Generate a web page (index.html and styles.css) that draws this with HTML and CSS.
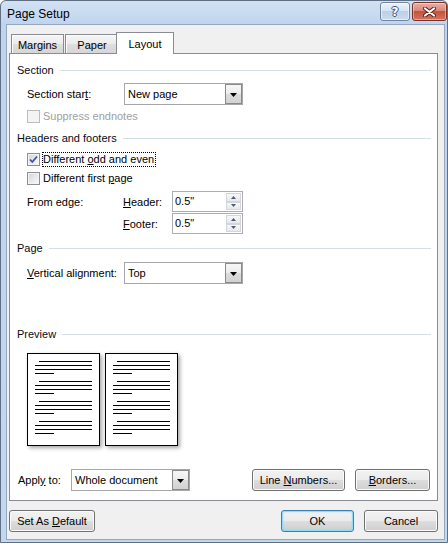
FILE: index.html
```html
<!DOCTYPE html>
<html>
<head>
<meta charset="utf-8">
<title>Page Setup</title>
<link rel="stylesheet" href="styles.css">
</head>
<body>
<div class="window">
  <div class="titlebar">
    <span class="title">Page Setup</span>
    <div class="caption">
      <div class="cbtn help"><span class="qmark">?</span></div>
      <div class="cbtn close">
        <svg width="13" height="10" viewBox="0 0 13 10"><path d="M2 1.5L11 8.5M11 1.5L2 8.5" stroke="#5a2018" stroke-width="4" stroke-linecap="round"/><path d="M2 1.5L11 8.5M11 1.5L2 8.5" stroke="#fff" stroke-width="2.2" stroke-linecap="round"/></svg>
      </div>
    </div>
  </div>
  <div class="client">
    <div class="tabs">
      <div class="tab tab-margins">Margins</div>
      <div class="tab tab-paper">Paper</div>
      <div class="tab tab-layout active">Layout</div>
    </div>
    <div class="panel">
      <div class="group g-section">Section</div>
      <div class="row r-start">
        <span class="label w97">Section star<u>t</u>:</span>
        <div class="combo"><span class="val">New page</span><span class="drop"><svg width="7" height="4" viewBox="0 0 7 4"><path d="M0 0H7L3.5 4Z" fill="#000"/></svg></span></div>
      </div>
      <div class="check r-suppress disabled">
        <span class="cb"></span><span class="cb-text">Suppress endnotes</span>
      </div>
      <div class="group g-hf">Headers and footers</div>
      <div class="check r-odd">
        <span class="cb"><svg width="11" height="11" viewBox="0 0 11 11"><path d="M2 5.5L4.3 8L9 2.5" fill="none" stroke="#3f549b" stroke-width="1.8"/></svg></span><span class="cb-text focus">Different <u>o</u>dd and even</span>
      </div>
      <div class="check r-first">
        <span class="cb"></span><span class="cb-text">Different first <u>p</u>age</span>
      </div>
      <div class="row r-edge">
        <span class="label w96 edge-label">From edge:</span>
        <div class="spins">
          <div class="spinrow">
            <span class="label w49"><u>H</u>eader:</span>
            <div class="spin"><span class="val">0.5&quot;</span><span class="spinbtns"><span class="sb"><svg width="5" height="3" viewBox="0 0 5 3"><path d="M0 3H5L2.5 0Z" fill="#4d5c78"/></svg></span><span class="sb"><svg width="5" height="3" viewBox="0 0 5 3"><path d="M0 0H5L2.5 3Z" fill="#4d5c78"/></svg></span></span></div>
          </div>
          <div class="spinrow">
            <span class="label w49"><u>F</u>ooter:</span>
            <div class="spin"><span class="val">0.5&quot;</span><span class="spinbtns"><span class="sb"><svg width="5" height="3" viewBox="0 0 5 3"><path d="M0 3H5L2.5 0Z" fill="#4d5c78"/></svg></span><span class="sb"><svg width="5" height="3" viewBox="0 0 5 3"><path d="M0 0H5L2.5 3Z" fill="#4d5c78"/></svg></span></span></div>
          </div>
        </div>
      </div>
      <div class="group g-page">Page</div>
      <div class="row r-valign">
        <span class="label w97"><u>V</u>ertical alignment:</span>
        <div class="combo"><span class="val">Top</span><span class="drop"><svg width="7" height="4" viewBox="0 0 7 4"><path d="M0 0H7L3.5 4Z" fill="#000"/></svg></span></div>
      </div>
      <div class="group g-preview">Preview</div>
      <div class="preview">
        <svg class="page" width="73" height="93" viewBox="0 0 73 93"><rect x="0.5" y="0.5" width="72" height="92" fill="#fff" stroke="#000"/><path d="M12 8.5H65M8 12.5H65M8 16.5H65M8 20.5H27M12 28.5H65M8 32.5H65M8 36.5H65M8 40.5H27M12 48.5H65M8 52.5H65M8 56.5H65M8 60.5H27M12 68.5H65M8 72.5H65M8 76.5H65M8 80.5H27" stroke="#000" stroke-width="1"/></svg>
        <svg class="page" width="73" height="93" viewBox="0 0 73 93"><rect x="0.5" y="0.5" width="72" height="92" fill="#fff" stroke="#000"/><path d="M12 8.5H65M8 12.5H65M8 16.5H65M8 20.5H27M12 28.5H65M8 32.5H65M8 36.5H65M8 40.5H27M12 48.5H65M8 52.5H65M8 56.5H65M8 60.5H27M12 68.5H65M8 72.5H65M8 76.5H65M8 80.5H27" stroke="#000" stroke-width="1"/></svg>
      </div>
      <div class="apply">
        <span class="label w53">Appl<u>y</u> to:</span>
        <div class="combo"><span class="val">Whole document</span><span class="drop"><svg width="7" height="4" viewBox="0 0 7 4"><path d="M0 0H7L3.5 4Z" fill="#000"/></svg></span></div>
        <div class="btn btn-lines">Line <u>N</u>umbers...</div>
        <div class="btn btn-borders"><u>B</u>orders...</div>
      </div>
    </div>
    <div class="footer">
      <div class="btn btn-default">Set As <u>D</u>efault</div>
      <div class="btn btn-ok">OK</div>
      <div class="btn btn-cancel">Cancel</div>
    </div>
  </div>
</div>
</body>
</html>
```
FILE: styles.css
```css
* { box-sizing: border-box; }
html, body { margin: 0; padding: 0; }
body {
  width: 448px;
  height: 543px;
  overflow: hidden;
  font-family: "Liberation Sans", Arial, sans-serif;
  font-size: 11px;
  color: #000;
  background: #fff;
}
u { text-decoration-thickness: 1px; text-underline-offset: 1px; }

.window {
  width: 448px;
  height: 543px;
  border: 1px solid #5f6f84;
  border-radius: 6px 6px 0 0;
  background: linear-gradient(to bottom, #d3e2f3 0, #c0d5ed 22px, #c3d7ee 100%);
  display: flex;
  flex-direction: column;
}

.titlebar {
  height: 23px;
  flex-shrink: 0;
  display: flex;
  align-items: flex-start;
}
.title {
  padding: 6px 0 0 6px;
  line-height: 14px;
  font-size: 12px;
  color: #000;
}
.caption {
  margin-left: auto;
  margin-top: 1px;
  display: flex;
  gap: 2px;
}
.cbtn {
  height: 19px;
  border: 1px solid;
  border-radius: 3px;
  display: flex;
  align-items: center;
  justify-content: center;
}
.help {
  width: 30px;
  border-color: #71859f;
  background: linear-gradient(to bottom, #eef3fa 0, #d6e3f2 45%, #bdd0e8 50%, #cadbef 100%);
  box-shadow: inset 0 0 0 1px rgba(255,255,255,0.55);
}
.qmark {
  font-family: "DejaVu Sans", sans-serif;
  font-weight: bold;
  font-size: 12px;
  line-height: 14px;
  color: #fff;
  text-shadow: -1px 0 #3e506c, 1px 0 #3e506c, 0 -1px #3e506c, 0 1px #3e506c;
}
.close {
  width: 35px;
  border-color: #763026;
  background: linear-gradient(to bottom, #eab0a4 0, #d98775 45%, #c6533d 50%, #d2735d 100%);
  box-shadow: inset 0 0 0 1px rgba(255,255,255,0.4);
}

.client {
  flex: 1;
  margin: 0 2px 2px 5px;
  border: 1px solid #93a7bf;
  background: #f0f0f0;
  display: flex;
  flex-direction: column;
}

.tabs {
  height: 28px;
  flex-shrink: 0;
  display: flex;
  align-items: flex-end;
  padding-left: 4px;
}
.tab {
  height: 19px;
  border: 1px solid #898c95;
  border-bottom: none;
  background: linear-gradient(to bottom, #f6f6f6 0, #ebebeb 50%, #dedede 51%, #d6d6d6 100%);
  box-shadow: inset 1px 1px 0 #fbfbfb;
  text-align: center;
  padding-top: 2px;
  line-height: 16px;
}
.tab-margins { width: 53px; margin-right: 1px; }
.tab-paper { width: 54px; }
.tab.active {
  width: 58px;
  height: 22px;
  margin-left: -3px;
  margin-bottom: -1px;
  background: #fff;
  box-shadow: none;
  position: relative;
  z-index: 1;
  padding-top: 4px;
  line-height: 15px;
}

.panel {
  width: 429px;
  height: 448px;
  margin-left: 2px;
  flex-shrink: 0;
  border: 1px solid #898c95;
  background: #fff;
  display: flex;
  flex-direction: column;
}

.group {
  height: 14px;
  line-height: 14px;
  display: flex;
  align-items: center;
  gap: 6px;
  padding: 0 6px 0 7px;
  color: #0a0a14;
}
.group::after {
  content: "";
  flex: 1;
  height: 1px;
  background: #d5dfe6;
}
.g-section { margin-top: 9px; }
.g-hf { margin-top: 7px; }
.g-page { margin-top: 7px; }
.g-preview { margin-top: 43px; }

.row {
  display: flex;
  align-items: center;
  padding-left: 17px;
}
.label { flex-shrink: 0; }
.w97 { width: 97px; }
.w96 { width: 96px; }
.w49 { width: 49px; }
.w53 { width: 53px; }

.r-start { margin-top: 6px; height: 22px; }
.r-valign { margin-top: 7px; height: 22px; }

.combo {
  width: 119px;
  height: 22px;
  flex-shrink: 0;
  display: flex;
  border: 1px solid #a5a7ab;
  background: #fff;
}
.combo .val {
  flex: 1;
  padding-left: 3px;
  line-height: 20px;
  white-space: nowrap;
}
.drop {
  width: 17px;
  border: 1px solid #8a8a8a;
  background: linear-gradient(to bottom, #f7f7f7 0, #ececec 50%, #dcdcdc 51%, #d2d2d2 100%);
  display: flex;
  align-items: center;
  justify-content: center;
}
.drop svg { display: block; margin-top: 1px; }

.check {
  display: flex;
  align-items: center;
  padding-left: 17px;
}
.r-suppress { margin-top: 4px; height: 15px; }
.r-odd { margin-top: 6px; height: 17px; }
.r-first { margin-top: 2px; height: 17px; }
.cb {
  width: 13px;
  height: 13px;
  flex-shrink: 0;
  margin-right: 2px;
  border: 1px solid #8e8f8f;
  background: linear-gradient(135deg, #cfd2d7 0, #e7e8ea 50%, #fbfbfb 100%);
  box-shadow: inset 0 0 0 1px #f4f4f4;
  display: flex;
  align-items: center;
  justify-content: center;
}
.cb svg { display: block; }
.cb-text {
  border: 1px dotted transparent;
  padding-right: 1px;
  line-height: 13px;
  white-space: nowrap;
}
.cb-text.focus { border-color: #000; }
.disabled .cb {
  border-color: #bcbcbc;
  background: #f4f4f4;
  box-shadow: none;
}
.disabled .cb-text { color: #a0a0a0; }

.r-edge {
  margin-top: 4px;
  height: 43px;
  align-items: flex-start;
}
.edge-label { line-height: 21px; padding-top: 1px; }
.spins {
  display: flex;
  flex-direction: column;
  gap: 1px;
}
.spinrow {
  display: flex;
  align-items: center;
  height: 21px;
}
.spin {
  width: 71px;
  height: 21px;
  display: flex;
  border: 1px solid #abadb3;
  background: #fff;
}
.spin .val {
  flex: 1;
  padding-left: 2px;
  line-height: 19px;
}
.spinbtns {
  width: 16px;
  padding: 1px 1px 1px 0;
  display: flex;
  flex-direction: column;
}
.sb {
  flex: 1;
  border: 1px solid #d3d6db;
  background: linear-gradient(to bottom, #f8f8f8, #e6e8eb);
  display: flex;
  align-items: center;
  justify-content: center;
}
.sb svg { display: block; }

.preview {
  display: flex;
  gap: 5px;
  padding-left: 17px;
  margin-top: 12px;
  height: 93px;
}
.page {
  display: block;
  box-shadow: 2px 2px 4px rgba(0,0,0,0.35);
}

.apply {
  display: flex;
  align-items: center;
  padding-left: 8px;
  margin-top: 23px;
  height: 22px;
}

.btn {
  height: 22px;
  flex-shrink: 0;
  border: 1px solid #707070;
  border-radius: 3px;
  background: linear-gradient(to bottom, #f2f2f2 0, #ebebeb 50%, #dddddd 51%, #cfcfcf 100%);
  box-shadow: inset 0 0 0 1px #fbfbfb;
  text-align: center;
  line-height: 20px;
  white-space: nowrap;
}
.btn-lines { width: 93px; margin-left: 62px; }
.btn-borders { width: 75px; margin-left: 10px; }

.footer {
  display: flex;
  margin-top: 9px;
  padding: 0 6px 0 2px;
}
.btn-default { width: 86px; }
.btn-ok {
  width: 73px;
  margin-left: auto;
  border-color: #3c7fb1;
  box-shadow: inset 0 0 0 1px #8fdcf9, inset 0 0 2px 1px rgba(72,200,250,0.35);
}
.btn-cancel { width: 74px; margin-left: 10px; }
```
